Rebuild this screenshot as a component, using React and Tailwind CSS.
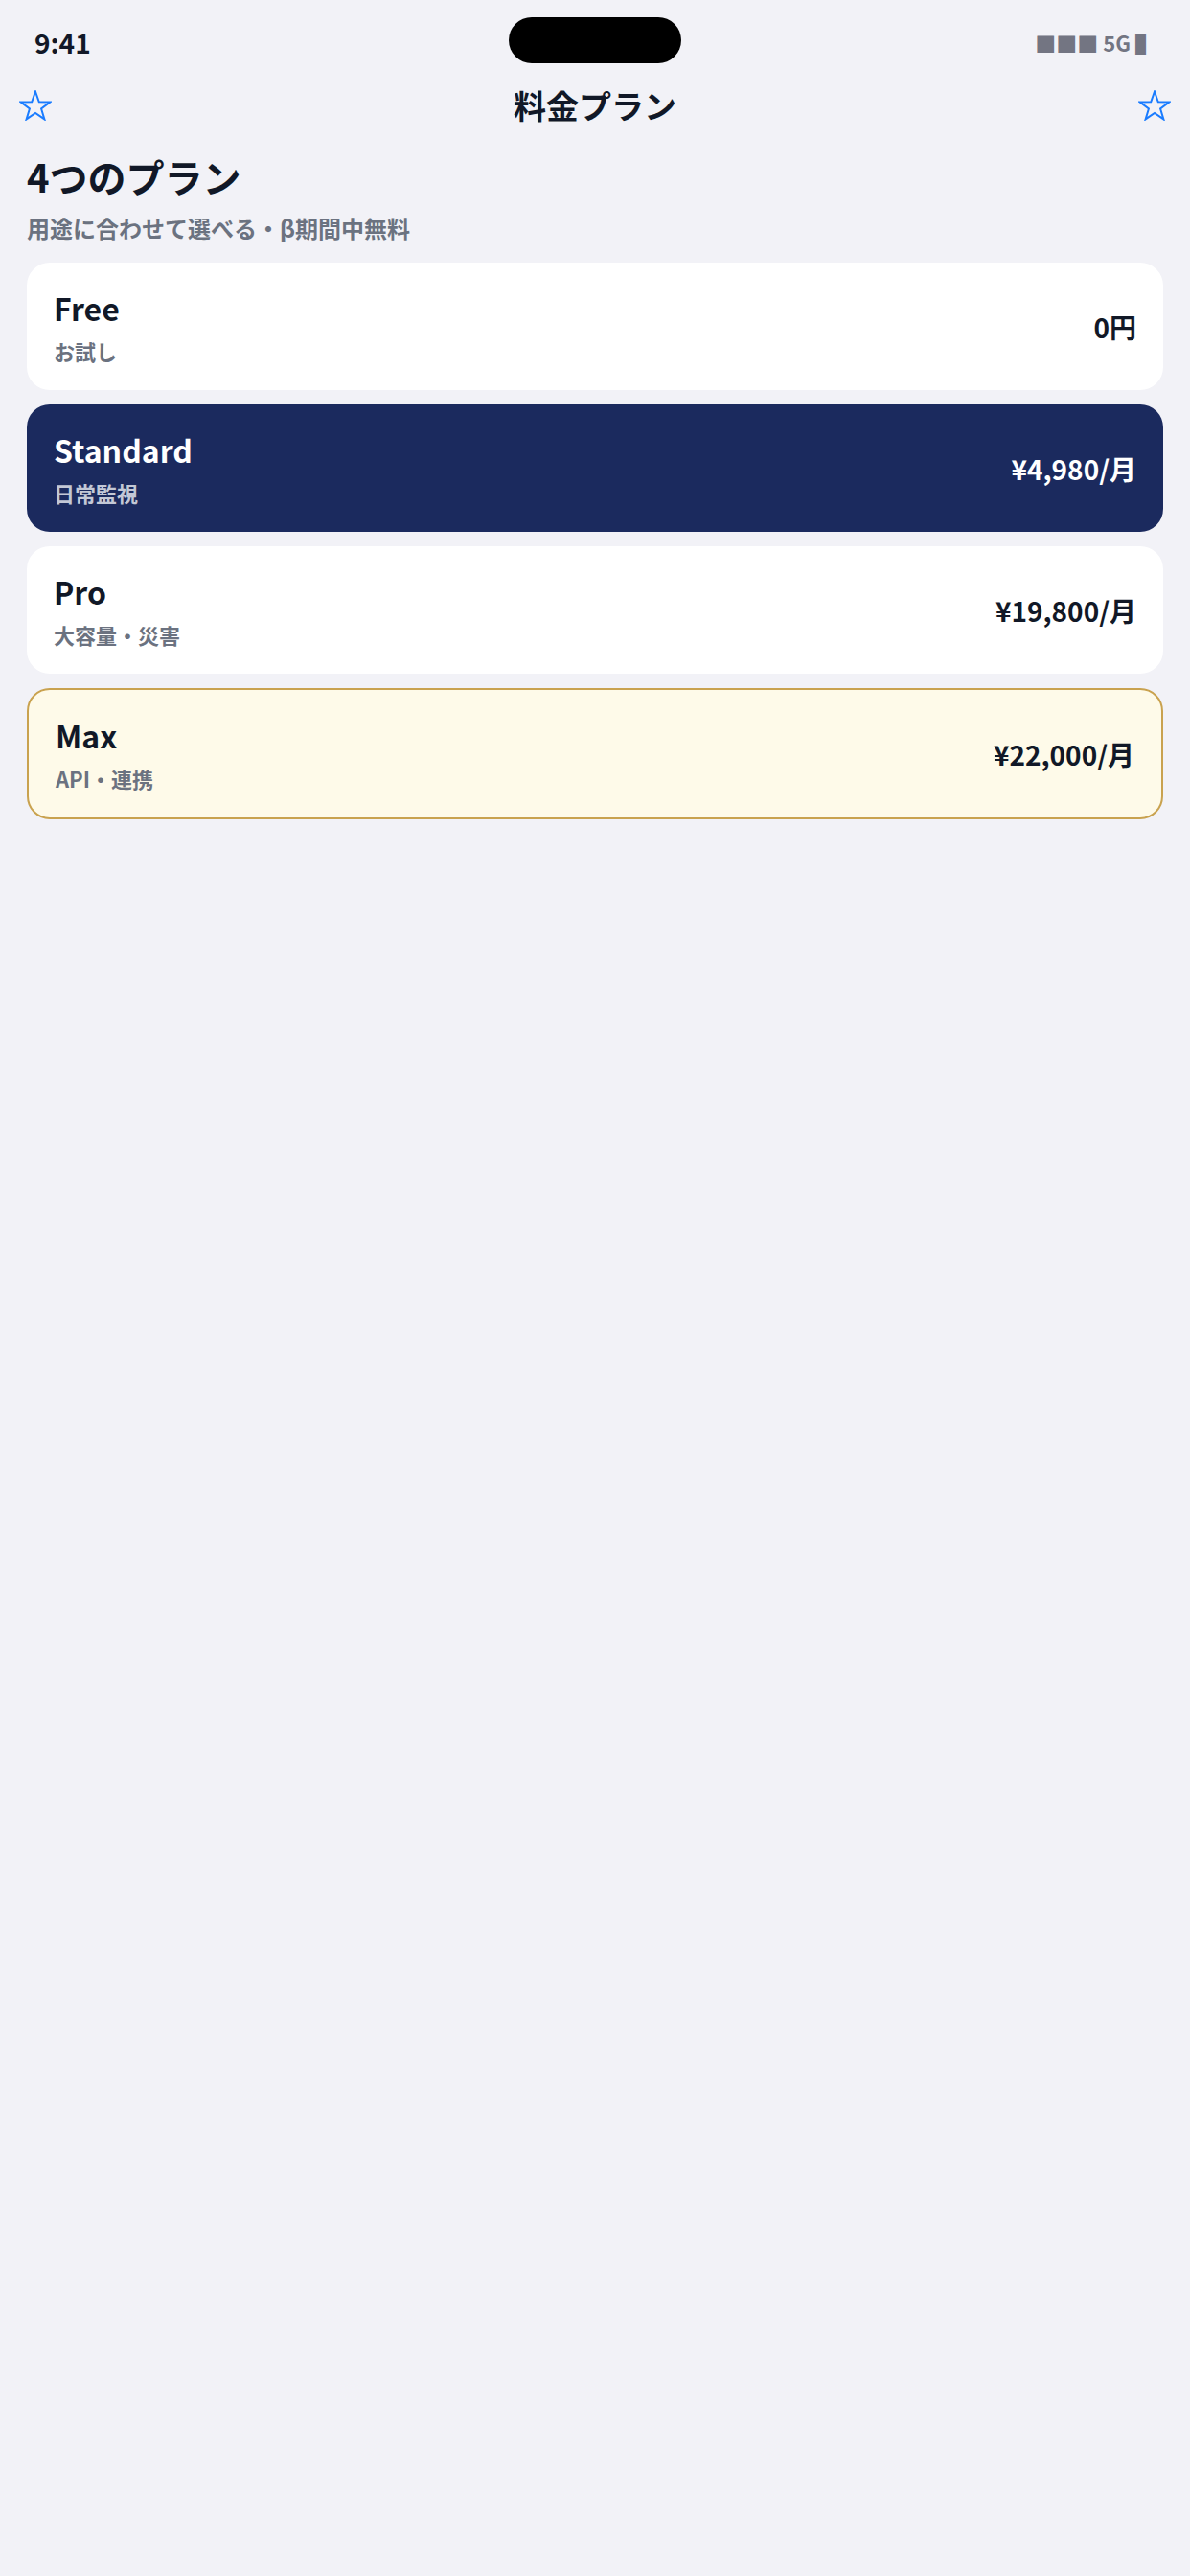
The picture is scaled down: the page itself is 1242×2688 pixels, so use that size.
import React from 'react';

const plans = [
  { name: 'Free', sub: 'お試し', price: '0円', kind: 'plain' },
  { name: 'Standard', sub: '日常監視', price: '¥4,980/月', kind: 'dark' },
  { name: 'Pro', sub: '大容量・災害', price: '¥19,800/月', kind: 'plain' },
  { name: 'Max', sub: 'API・連携', price: '¥22,000/月', kind: 'gold' },
];

function Star() {
  return (
    <svg width="34" height="32" viewBox="0 0 34 32" fill="none">
      <polygon
        points="17,1.5 20.76,12.32 32.22,12.56 23.09,19.48 26.4,30.44 17,23.9 7.6,30.44 10.91,19.48 1.78,12.56 13.24,12.32"
        stroke="#1a7cff"
        strokeWidth="2"
        strokeLinejoin="miter"
      />
    </svg>
  );
}

function PlanCard({ plan }) {
  const box =
    plan.kind === 'dark'
      ? 'bg-[#1b2a5e] h-[133px]'
      : plan.kind === 'gold'
      ? 'bg-[#fefae9] border-2 border-[#c9a24f] h-[137px]'
      : 'bg-white h-[133px]';
  const title = plan.kind === 'dark' ? 'text-white' : 'text-[#111827]';
  const sub = plan.kind === 'dark' ? 'text-[#c3c8d6]' : 'text-[#6b7280]';
  return (
    <div className={`rounded-[24px] px-[28px] flex items-center justify-between ${box}`}>
      <div className="flex flex-col">
        <div className={`text-[32px] leading-[40px] font-bold ${title}`}>{plan.name}</div>
        <div className={`mt-[11px] text-[22px] leading-[28px] font-bold ${sub}`}>{plan.sub}</div>
      </div>
      <div className={`text-[28px] leading-[36px] font-bold ${title}`}>{plan.price}</div>
    </div>
  );
}

export default function App() {
  return (
    <div
      className="w-[1242px] min-h-[2688px] bg-[#f2f2f7]"
      style={{ fontFamily: '"Noto Sans CJK JP", "Noto Sans", sans-serif' }}
    >
      <div className="pt-[18px] grid grid-cols-[1fr_180px_1fr] items-center h-[66px]">
        <div className="pl-[36px] pt-[3px] text-[28px] leading-[34px] font-bold text-[#111827]">9:41</div>
        <div className="h-[48px] w-[180px] rounded-full bg-black" />
        <div className="pr-[35px] pt-[3px] flex justify-end text-[22px] leading-[30px] font-bold text-[#737582]">
          ■■■ 5G ▌
        </div>
      </div>

      <div className="h-[88px] px-[20px] flex items-center justify-between">
        <Star />
        <div className="text-[34px] leading-[40px] font-bold text-[#111827]">料金プラン</div>
        <Star />
      </div>

      <main className="px-[28px]">
        <h1 className="mt-[6px] text-[40px] leading-[48px] font-bold text-[#111827]">4つのプラン</h1>
        <p className="mt-[13px] text-[24px] leading-[34px] font-bold text-[#6b7280]">
          用途に合わせて選べる・β期間中無料
        </p>
        <div className="mt-[19px] flex flex-col gap-[15px]">
          {plans.map(p => (
            <PlanCard key={p.name} plan={p} />
          ))}
        </div>
      </main>
    </div>
  );
}
